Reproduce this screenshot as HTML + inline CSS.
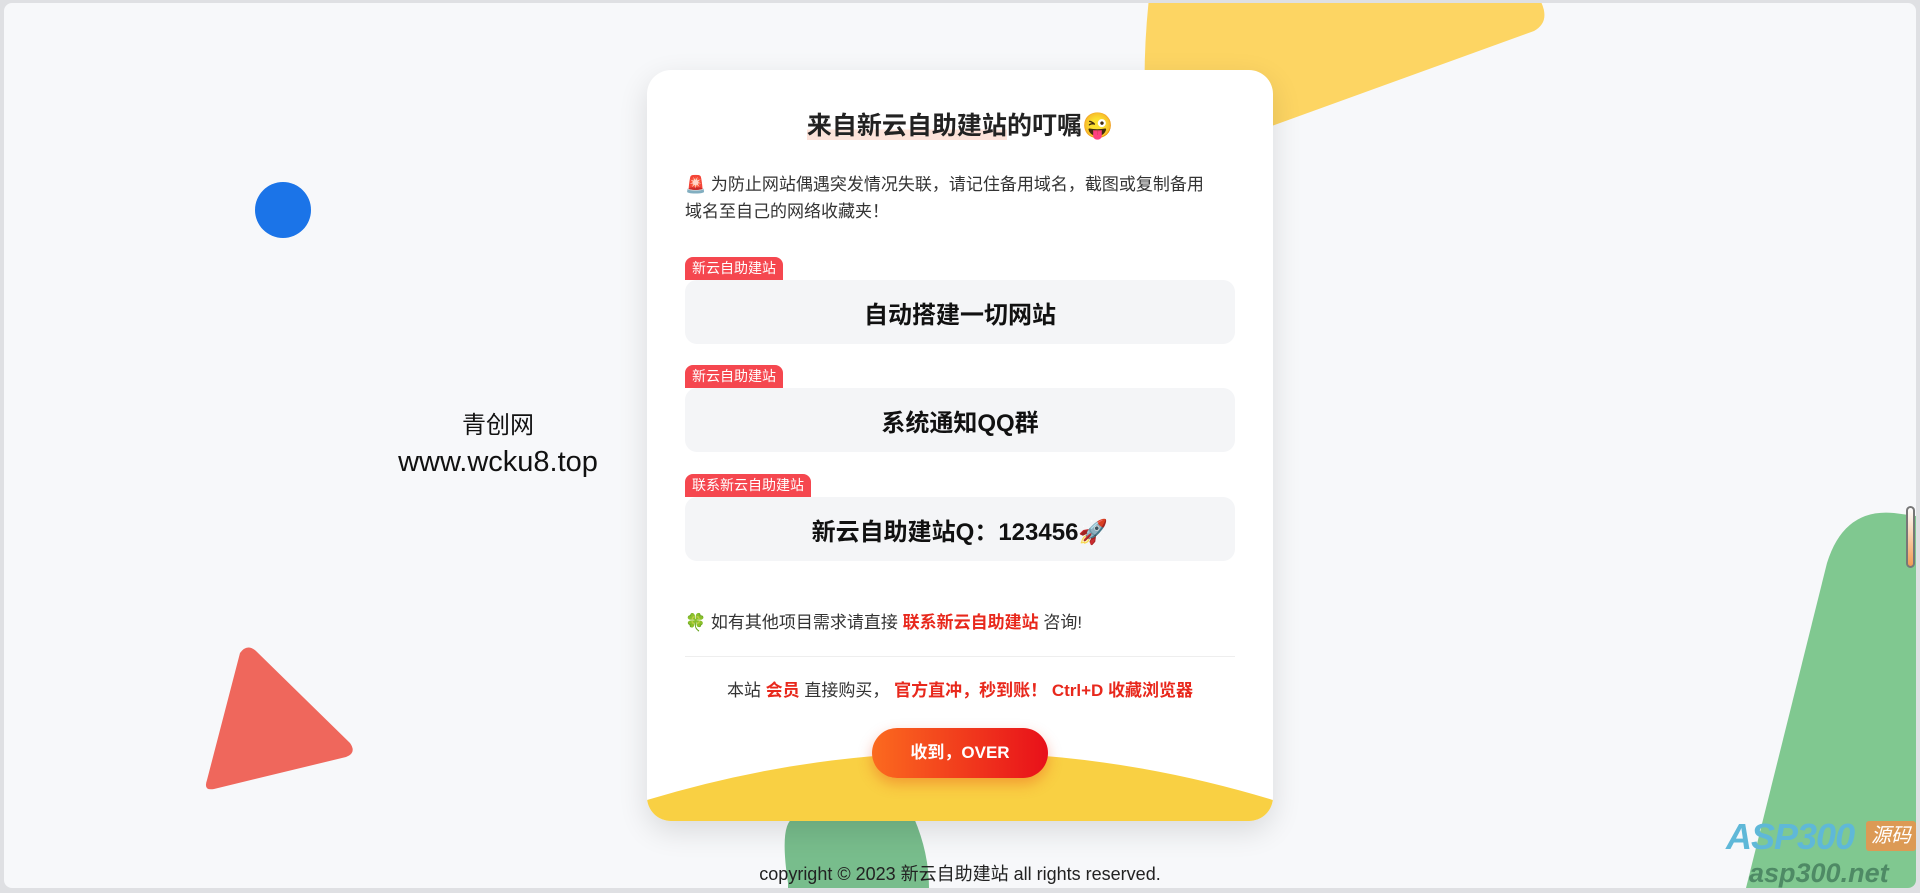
<!DOCTYPE html>
<html><head><meta charset="utf-8">
<style>
*{margin:0;padding:0;box-sizing:border-box}
html,body{width:1920px;height:893px;overflow:hidden;background:#dfe0e3;font-family:"Liberation Sans","Noto Sans CJK SC",sans-serif}
.page{position:absolute;left:4px;top:3px;width:1912px;height:885px;background:#f7f8fa;border-radius:8px;overflow:hidden}
.abs{position:absolute}
.card{position:absolute;width:626px;height:751px;background:#fff;border-radius:24px;box-shadow:0 10px 30px rgba(0,0,0,.12);overflow:hidden}
.title{position:absolute;left:0;right:0;top:36px;text-align:center;font-size:25px;font-weight:bold;color:#222}
.title .hl{background:linear-gradient(transparent 62%,#fde3da 62%)}
.notice{position:absolute;left:38px;width:560px;top:101px;font-size:17px;line-height:27px;color:#333;white-space:nowrap}
.tag{position:absolute;left:38px;height:23px;padding:0 7px;background:#f5474f;color:#fff;font-size:14px;line-height:23px;border-radius:8px 8px 0 0}
.box{position:absolute;left:38px;width:550px;height:64px;background:#f4f5f7;border-radius:12px;text-align:center;line-height:72px;font-size:24px;font-weight:bold;color:#111}
.line{position:absolute;left:38px;width:550px;font-size:17px;color:#333}
.red{color:#e8281c;font-weight:bold}
</style></head><body>
<div class="page">
 <svg class="abs" style="left:0;top:0" width="1912" height="885">
  <path d="M1145,-5 L1535,-5 Q1548,18 1530,28 L1265,124 L1142,124 Q1138,60 1145,-5 Z" fill="#fdd563"/>
  <path d="M1823,560 Q1840,505 1890,510 L1912,513 L1912,885 L1742,885 Z" fill="#80c890"/>
  <path d="M784,880 Q775,820 790,815 L910,815 Q925,850 925,885 L784,885 Z" fill="#78bd8c"/>
  <circle cx="279" cy="207" r="28" fill="#1b74e8"/>
  <path d="M236,650 Q243,640 252,648 L346,740 Q353,750 342,754 L210,786 Q199,788 203,777 Z" fill="#ef675c"/>
 </svg>
 <div class="abs" style="left:364px;top:405px;width:260px;text-align:center;font-size:24px;line-height:36px;color:#111">青创网<br><span style="font-size:29px">www.wcku8.top</span></div>

 <div class="card" style="left:643px;top:67px">
  <div class="title"><span class="hl">来自新云自助建站</span>的叮嘱😜</div>
  <div class="notice">🚨 为防止网站偶遇突发情况失联，请记住备用域名，截图或复制备用<br>域名至自己的网络收藏夹！</div>
  <div class="tag" style="top:187px">新云自助建站</div>
  <div class="box" style="top:210px">自动搭建一切网站</div>
  <div class="tag" style="top:295px">新云自助建站</div>
  <div class="box" style="top:318px">系统通知QQ群</div>
  <div class="tag" style="top:404px">联系新云自助建站</div>
  <div class="box" style="top:427px">新云自助建站Q：123456🚀</div>
  <div class="line" style="top:538px">🍀 如有其他项目需求请直接 <span class="red">联系新云自助建站</span> 咨询!</div>
  <div class="abs" style="left:38px;width:550px;top:586px;height:1px;background:#eee"></div>
  <div class="line" style="top:606px;text-align:center">本站 <span class="red">会员</span> 直接购买， <span class="red">官方直冲，秒到账！ Ctrl+D 收藏浏览器</span></div>
  <svg class="abs" style="left:0;top:660px" width="626" height="91"><path d="M0,70 Q313,-25 626,70 L626,91 L0,91 Z" fill="#f9d043"/></svg>
  <div class="abs" style="left:225px;top:658px;width:176px;height:50px;border-radius:25px;background:linear-gradient(90deg,#fb6a1f,#e8101a);color:#fff;font-weight:bold;font-size:17px;text-align:center;line-height:50px;box-shadow:0 6px 14px rgba(230,60,20,.35)">收到，OVER</div>
 </div>
 <div class="abs" style="left:0;width:1912px;top:857px;text-align:center;font-size:18px;color:#222">copyright © 2023 新云自助建站 all rights reserved.</div>
 <div class="abs" style="left:1902px;top:503px;width:9px;height:62px;border:2px solid #777;border-radius:5px;background:linear-gradient(#fff,#f39c52)"></div>
 <div class="abs" style="left:1722px;top:813px;font-size:36px;font-weight:bold;font-style:italic;color:#5fb8d8;letter-spacing:-1px">ASP300</div>
 <div class="abs" style="left:1862px;top:818px;width:50px;height:30px;background:#dc9a55;color:#fff;font-size:20px;font-style:italic;text-align:center;line-height:30px;border-radius:3px">源码</div>
 <div class="abs" style="left:1745px;top:855px;font-size:27px;font-weight:bold;font-style:italic;color:#4e8a65">asp300.net</div>
</div>
</body></html>
